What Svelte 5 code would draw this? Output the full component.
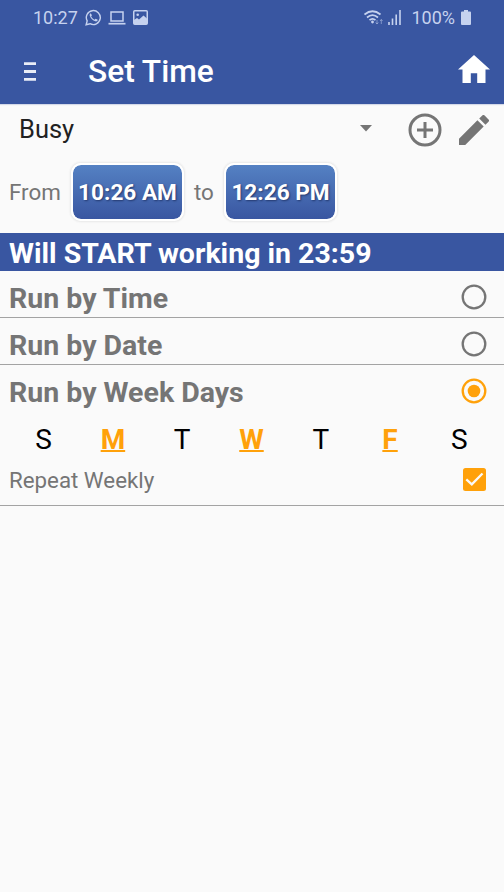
<script lang="ts">
  type Mode = 'time' | 'date' | 'week';

  const modes: { id: Mode; label: string }[] = [
    { id: 'time', label: 'Run by Time' },
    { id: 'date', label: 'Run by Date' },
    { id: 'week', label: 'Run by Week Days' }
  ];

  let mode = $state<Mode>('week');
  let repeat = $state(true);
  let days = $state([
    { label: 'S', on: false },
    { label: 'M', on: true },
    { label: 'T', on: false },
    { label: 'W', on: true },
    { label: 'T', on: false },
    { label: 'F', on: true },
    { label: 'S', on: false }
  ]);
</script>

<div class="screen">
  <div class="status">
    <span class="clock">10:27</span>
    <svg class="whatsapp" width="17" height="17" viewBox="0 0 18 18">
      <path d="M1.2 16.7l1.1-4.1A7.4 7.4 0 1 1 5.3 15.6z" fill="none" stroke="currentColor" stroke-width="1.5" />
      <path d="M6 4.5c-.8.5-1.3 1.5-.9 2.7 1 3 3.1 5 5.9 5.9 1.2.3 2.3-.4 2.5-1.6l-2.3-1.2-1.1 1.1C8.4 10.6 7.1 9.3 6.5 7.8l.9-1.1z" fill="currentColor" />
    </svg>
    <svg class="laptop" width="18" height="14" viewBox="0 0 18 14">
      <path d="M3 1h12v9H3z" fill="none" stroke="currentColor" stroke-width="1.5" />
      <path d="M.5 12.7h17" stroke="currentColor" stroke-width="1.7" />
    </svg>
    <svg class="picture" width="15" height="15" viewBox="0 0 15 15">
      <rect x=".75" y=".75" width="13.5" height="13.5" rx="1" fill="none" stroke="currentColor" stroke-width="1.5" />
      <path d="M1 14V10l3-2 2 1.5L10.5 5.5 14 8.5V14z" fill="currentColor" />
      <circle cx="4.7" cy="4.7" r="1.3" fill="currentColor" />
    </svg>
    <svg class="wifi" width="20" height="16" viewBox="0 0 20 16">
      <g fill="none" stroke="currentColor" stroke-width="1.7">
        <path d="M.5 4.5Q8.5-2 16.5 4.5" />
        <path d="M3 7.5Q8.5 2.8 14 7.5" />
        <path d="M5.5 10.2Q8.5 7.6 11.5 10.2" />
      </g>
      <circle cx="8.5" cy="12" r="1.4" fill="currentColor" />
      <path d="M13 10v4m-1.3-1.5L13 14l1.3-1.5M17.3 14v-4.5m-1.3 1.5l1.3-1.5 1.3 1.5" fill="none" stroke="currentColor" opacity=".5" />
    </svg>
    <svg class="signal" width="13" height="15" viewBox="0 0 13 15">
      <path d="M1 12v3M4.5 8.5V15M8.2 4.5V15M12 0V15" stroke="currentColor" stroke-width="1.6" />
    </svg>
    <span class="percent">100%</span>
    <svg class="battery" width="10" height="15" viewBox="0 0 10 15">
      <path d="M3 0h4v1.5h2q1 0 1 1V14q0 1-1 1H1q-1 0-1-1V2.5q0-1 1-1h2z" fill="currentColor" />
    </svg>
  </div>

  <header>
    <button class="menu" aria-label="Menu">
      <svg width="12" height="19" viewBox="0 0 12 19">
        <path d="M0 1.7h12M0 9.5h12M0 17.3h12" stroke="currentColor" stroke-width="2.8" />
      </svg>
    </button>
    <h1>Set Time</h1>
    <button class="home" aria-label="Home">
      <svg width="32" height="28" viewBox="0 0 32 28">
        <path d="M16 0L32 14.5h-4.5V28h-8.3V18.3h-6.4V28H4.5V14.5H0z" fill="currentColor" />
      </svg>
    </button>
  </header>

  <div class="profile">
    <span class="name">Busy</span>
    <svg class="caret" width="12" height="7" viewBox="0 0 12 7"><path d="M0 0h12L6 6.5z" fill="currentColor" /></svg>
    <button class="add" aria-label="Add">
      <svg width="34" height="34" viewBox="0 0 34 34">
        <circle cx="17" cy="17" r="15" fill="none" stroke="currentColor" stroke-width="3" />
        <path d="M9 17h16M17 9v16" stroke="currentColor" stroke-width="3" />
      </svg>
    </button>
    <button class="edit" aria-label="Edit">
      <svg width="30" height="30" viewBox="3 3 18 18">
        <path d="M3 17.25V21h3.75L17.81 9.94l-3.75-3.75L3 17.25zM20.71 7.04a1 1 0 0 0 0-1.41l-2.34-2.34a1 1 0 0 0-1.41 0l-1.83 1.83 3.75 3.75 1.83-1.83z" fill="currentColor" />
      </svg>
    </button>
  </div>

  <div class="range">
    <span class="from">From</span>
    <button class="time">10:26 AM</button>
    <span class="to">to</span>
    <button class="time">12:26 PM</button>
  </div>

  <div class="banner">Will START working in 23:59</div>

  {#each modes as m (m.id)}
    <button class="mode" class:last={m.id === 'week'} onclick={() => (mode = m.id)}>
      <span>{m.label}</span>
      <svg class:on={mode === m.id} width="26" height="26" viewBox="0 0 26 26">
        <circle cx="13" cy="13" r="11.3" fill="none" stroke="currentColor" stroke-width="2.3" />
        {#if mode === m.id}
          <circle cx="13" cy="13" r="6.3" fill="currentColor" />
        {/if}
      </svg>
    </button>
  {/each}

  <div class="days">
    {#each days as day}
      <button class:on={day.on} onclick={() => (day.on = !day.on)}><span>{day.label}</span></button>
    {/each}
  </div>

  <button class="repeat" onclick={() => (repeat = !repeat)}>
    <span>Repeat Weekly</span>
    <svg width="23" height="23" viewBox="0 0 23 23">
      {#if repeat}
        <rect width="23" height="23" rx="2.5" fill="#ffa10a" />
        <path d="M3.3 11.3l5.5 5L19.5 5.5" fill="none" stroke="#fafafa" stroke-width="2.3" />
      {:else}
        <rect x="1" y="1" width="21" height="21" rx="2" fill="none" stroke="#757575" stroke-width="2" />
      {/if}
    </svg>
  </button>
</div>

<style>
  :global(body) {
    margin: 0;
    background: #fafafa;
  }
  .screen {
    min-height: 892px;
    background: #fafafa;
    color: #757575;
    font-family: Roboto, sans-serif;
  }
  button {
    display: block;
    margin: 0;
    padding: 0;
    border: 0;
    background: none;
    color: inherit;
    font: inherit;
  }
  svg {
    display: block;
    flex: none;
  }
  .status {
    display: flex;
    align-items: center;
    box-sizing: border-box;
    height: 36px;
    padding: 0 33px 1px 33px;
    background: #3956a1;
    color: #c6d2ef;
    font-size: 18px;
  }
  .clock {
    width: 52px;
  }
  .laptop {
    margin-left: 6px;
  }
  .picture {
    margin-left: 7px;
  }
  .wifi {
    margin-left: auto;
  }
  .signal {
    margin-left: 4px;
  }
  .percent {
    margin-left: 10px;
  }
  .battery {
    margin-left: 6px;
  }
  header {
    display: flex;
    align-items: center;
    box-sizing: border-box;
    height: 68px;
    padding: 0 14px 0 24px;
    background: #3956a1;
    color: #fff;
    box-shadow: 0 1px 1px #d4d9e8;
  }
  .menu {
    padding-top: 2px;
    color: #e9edf7;
  }
  h1 {
    margin: 2px auto 0 52px;
    font-size: 31.7px;
    font-weight: 500;
  }
  .home {
    margin-top: -2px;
  }
  .profile {
    display: flex;
    align-items: center;
    height: 51px;
    padding: 0 15px 0 19px;
  }
  .name {
    flex: 1;
    margin-top: -2px;
    color: #212121;
    font-size: 25.5px;
  }
  .caret {
    margin: -3px 36px 0 0;
  }
  .edit {
    margin-left: 17px;
  }
  .range {
    display: flex;
    align-items: center;
    box-sizing: border-box;
    height: 78px;
    padding: 0 0 4px 9px;
    font-size: 22.4px;
  }
  .from {
    width: 52px;
  }
  .time {
    box-sizing: border-box;
    width: 113px;
    height: 58px;
    margin-left: 10px;
    border: 2px solid #fff;
    border-radius: 10px;
    background: linear-gradient(#5481c3, #3956a1) padding-box;
    box-shadow: 0 0 2px 1px #e8e8e8;
    color: #fff;
    font-size: 22.6px;
    font-weight: 700;
    text-shadow: 1px 1px 2px #23396f;
    white-space: nowrap;
  }
  .to {
    width: 20px;
    margin-left: 10px;
  }
  .banner {
    height: 38px;
    padding-left: 9px;
    background: #3956a1;
    color: #fff;
    font-size: 28.5px;
    font-weight: 700;
    line-height: 42px;
  }
  .mode {
    display: flex;
    align-items: center;
    justify-content: space-between;
    box-sizing: border-box;
    width: 100%;
    height: 47px;
    padding: 5px 17px 0 9px;
    border-bottom: 1px solid #a3a3a3;
    font-size: 28.5px;
    font-weight: 700;
  }
  .mode span {
    padding-top: 3px;
  }
  .mode.last {
    border-bottom-color: transparent;
  }
  .mode .on {
    color: #ffa10a;
  }
  .days {
    display: flex;
    height: 50px;
    padding: 0 10px 0 9px;
    color: #000;
    font-size: 28px;
  }
  .days button {
    flex: 1;
    padding-top: 5px;
    text-align: center;
  }
  .days .on {
    color: #ffa10a;
    font-weight: 700;
  }
  .days .on span {
    text-decoration: underline;
    text-decoration-thickness: 1.5px;
  }
  .repeat {
    display: flex;
    align-items: center;
    justify-content: space-between;
    box-sizing: border-box;
    width: 100%;
    height: 44px;
    padding: 0 18px 8px 9px;
    border-bottom: 1px solid #a3a3a3;
    font-size: 22.3px;
  }
</style>
